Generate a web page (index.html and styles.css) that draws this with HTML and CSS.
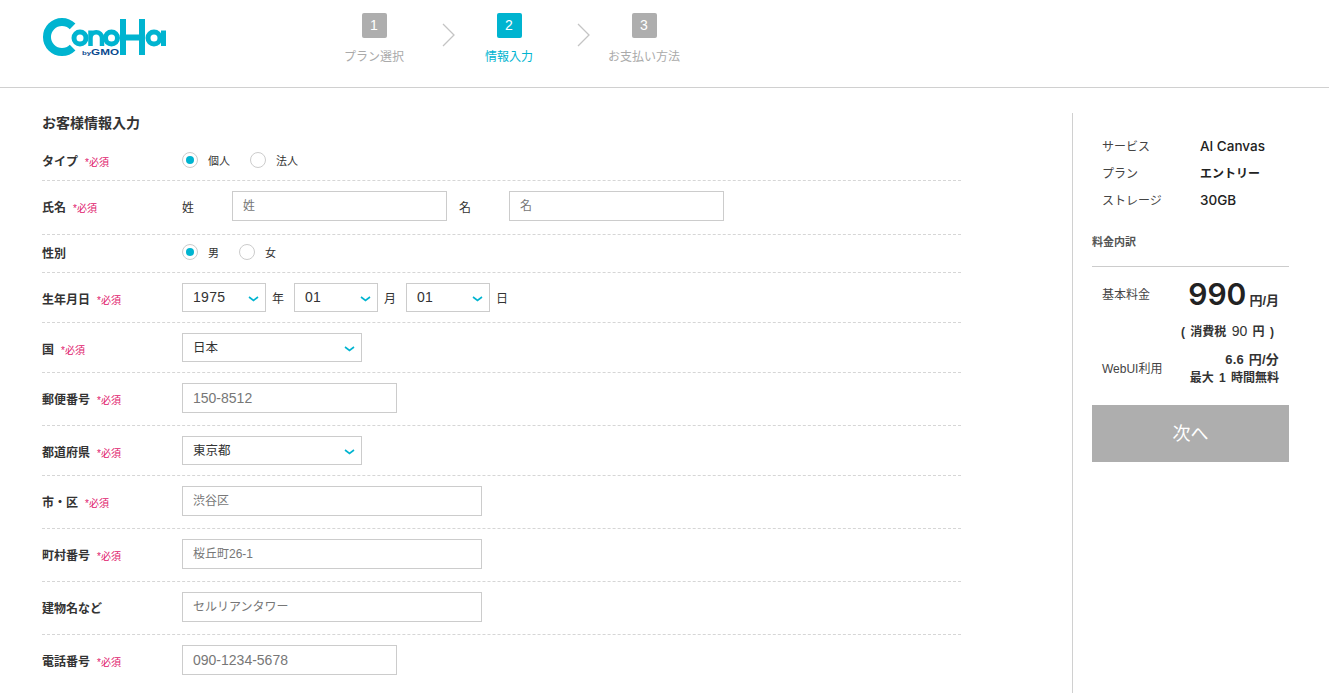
FILE: index.html
```html
<!DOCTYPE html>
<html lang="ja">
<head>
<meta charset="utf-8">
<title>ConoHa お客様情報入力</title>
<link rel="stylesheet" href="styles.css">
</head>
<body>
<header class="header">
  <a class="logo" aria-label="ConoHa by GMO">
    <svg width="126" height="40" viewBox="0 0 126 40" fill="none">
      <g stroke="#00b4d0">
        <path d="M30.6 8.4A15 15 0 1 0 30.6 29.6" stroke-width="8"/>
        <circle cx="38" cy="20" r="6" stroke-width="5"/>
        <path d="M48.5 28V12.5M48.5 20a5.75 5.75 0 0 1 11.5 0V28" stroke-width="4.5"/>
        <circle cx="69.5" cy="20" r="6" stroke-width="5"/>
        <path d="M81 1V37M100 1V37M81 19.5H100" stroke-width="6"/>
        <circle cx="112" cy="20" r="6" stroke-width="5"/>
        <path d="M121.5 12.5V28" stroke-width="5"/>
      </g>
      <text class="logo-gmo" x="40" y="36.5" textLength="37" lengthAdjust="spacingAndGlyphs"><tspan class="logo-by">by</tspan>GMO</text>
    </svg>
  </a>
  <ol class="steps">
    <li class="step"><span class="step-num">1</span><span class="step-label">プラン選択</span></li>
    <li class="step-arrow"><svg width="13" height="24" viewBox="0 0 13 24" fill="none"><path d="M1 1L12 12L1 23" stroke="#c4c4c4" stroke-width="1.3"/></svg></li>
    <li class="step current"><span class="step-num">2</span><span class="step-label">情報入力</span></li>
    <li class="step-arrow"><svg width="13" height="24" viewBox="0 0 13 24" fill="none"><path d="M1 1L12 12L1 23" stroke="#c4c4c4" stroke-width="1.3"/></svg></li>
    <li class="step"><span class="step-num">3</span><span class="step-label">お支払い方法</span></li>
  </ol>
</header>
<main class="main">
  <form class="form">
    <h1 class="form-title">お客様情報入力</h1>

    <div class="row row-radio">
      <div class="label">タイプ<em class="req">*必須</em></div>
      <div class="field">
        <span class="radio on"></span><span class="radio-text">個人</span>
        <span class="radio"></span><span class="radio-text">法人</span>
      </div>
    </div>

    <div class="row row-name">
      <div class="label">氏名<em class="req">*必須</em></div>
      <div class="field">
        <span class="name-label">姓</span><input class="input w215" placeholder="姓">
        <span class="name-label second">名</span><input class="input w215" placeholder="名">
      </div>
    </div>

    <div class="row row-radio">
      <div class="label">性別</div>
      <div class="field">
        <span class="radio on"></span><span class="radio-text">男</span>
        <span class="radio"></span><span class="radio-text">女</span>
      </div>
    </div>

    <div class="row row-select">
      <div class="label">生年月日<em class="req">*必須</em></div>
      <div class="field">
        <div class="select w84"><select class="num"><option>1975</option></select><svg class="chev" width="11" height="6" viewBox="0 0 11 6" fill="none"><path d="M1 1L5.5 4.5L10 1" stroke="#00b4d0" stroke-width="1.6"/></svg></div>
        <span class="unit">年</span>
        <div class="select w84"><select class="num"><option>01</option></select><svg class="chev" width="11" height="6" viewBox="0 0 11 6" fill="none"><path d="M1 1L5.5 4.5L10 1" stroke="#00b4d0" stroke-width="1.6"/></svg></div>
        <span class="unit">月</span>
        <div class="select w84"><select class="num"><option>01</option></select><svg class="chev" width="11" height="6" viewBox="0 0 11 6" fill="none"><path d="M1 1L5.5 4.5L10 1" stroke="#00b4d0" stroke-width="1.6"/></svg></div>
        <span class="unit">日</span>
      </div>
    </div>

    <div class="row row-select">
      <div class="label">国<em class="req">*必須</em></div>
      <div class="field">
        <div class="select w180"><select><option>日本</option></select><svg class="chev" width="11" height="6" viewBox="0 0 11 6" fill="none"><path d="M1 1L5.5 4.5L10 1" stroke="#00b4d0" stroke-width="1.6"/></svg></div>
      </div>
    </div>

    <div class="row row-input">
      <div class="label">郵便番号<em class="req">*必須</em></div>
      <div class="field"><input class="input num w215" placeholder="150-8512"></div>
    </div>

    <div class="row row-select">
      <div class="label">都道府県<em class="req">*必須</em></div>
      <div class="field">
        <div class="select w180"><select><option>東京都</option></select><svg class="chev" width="11" height="6" viewBox="0 0 11 6" fill="none"><path d="M1 1L5.5 4.5L10 1" stroke="#00b4d0" stroke-width="1.6"/></svg></div>
      </div>
    </div>

    <div class="row row-input">
      <div class="label">市・区<em class="req">*必須</em></div>
      <div class="field"><input class="input w300" placeholder="渋谷区"></div>
    </div>

    <div class="row row-input">
      <div class="label">町村番号<em class="req">*必須</em></div>
      <div class="field"><input class="input w300" placeholder="桜丘町26-1"></div>
    </div>

    <div class="row row-input">
      <div class="label">建物名など</div>
      <div class="field"><input class="input w300" placeholder="セルリアンタワー"></div>
    </div>

    <div class="row row-input row-last">
      <div class="label">電話番号<em class="req">*必須</em></div>
      <div class="field"><input class="input num w215" placeholder="090-1234-5678"></div>
    </div>
  </form>

  <aside class="side">
    <dl class="summary">
      <div class="summary-row"><dt>サービス</dt><dd>AI Canvas</dd></div>
      <div class="summary-row"><dt>プラン</dt><dd class="small">エントリー</dd></div>
      <div class="summary-row"><dt>ストレージ</dt><dd>30GB</dd></div>
    </dl>
    <h2 class="side-title">料金内訳</h2>
    <div class="price-row">
      <span class="price-label">基本料金</span>
      <span class="price"><b class="price-num">990</b><b class="price-unit">円/月</b></span>
    </div>
    <p class="tax"><b>( 消費税</b> <span class="tax-num">90</span> <b>円 )</b></p>
    <div class="webui">
      <span class="price-label">WebUI利用</span>
      <span class="webui-price"><b class="webui-rate">6.6 円/分</b><b class="webui-free">最大 1 時間無料</b></span>
    </div>
    <button class="next" type="button">次へ</button>
  </aside>
</main>
</body>
</html>
```
FILE: styles.css
```css
* { box-sizing: border-box; }
html, body { margin: 0; padding: 0; height: 100%; }
body {
  height: 100vh;
  overflow: hidden;
  background: #fff;
  color: #333;
  font-family: "Liberation Sans", "Noto Sans CJK JP", sans-serif;
  font-size: 12px;
}

/* header */
.header {
  display: flex;
  height: 88px;
  padding-left: 42px;
  border-bottom: 1px solid #d0d0d0;
}
.logo { display: block; width: 126px; height: 40px; margin-top: 18px; }
.logo svg { display: block; }
.logo-gmo { font: bold 9px "Liberation Sans", sans-serif; fill: #0b4a8f; }
.logo-by { font-size: 6px; }
.steps {
  display: flex;
  list-style: none;
  margin: 0 0 0 156px;
  padding: 0;
}
.step {
  display: flex;
  flex-direction: column;
  align-items: center;
  width: 100px;
  padding-top: 13px;
  color: #aaa;
}
.step-num {
  width: 25px;
  height: 25px;
  border-radius: 2px;
  background: #aeaeae;
  color: #fff;
  font-size: 14px;
  line-height: 25px;
  text-align: center;
}
.step-label { margin-top: 11px; line-height: 16px; white-space: nowrap; }
.step.current { color: #00b4d0; }
.step.current .step-num { background: #00b4d0; }
.step-arrow { width: 13px; margin: 23px 4px 0 18px; }

/* layout */
.main { display: flex; padding-left: 42px; padding-top: 25px; height: 605px; }
.form { width: 919px; }
.form-title {
  margin: 0;
  padding-bottom: 10px;
  font-size: 14px;
  line-height: 20px;
  font-weight: bold;
}

/* rows */
.row {
  display: flex;
  align-items: center;
  border-bottom: 1px dashed #d6d6d6;
}
.row-radio { padding: 8px 0 11px; }
.row-name { padding: 10px 0 13px; }
.row-select { padding: 10px 0; }
.row-input { padding: 10px 0 12px; }
.row-last { border-bottom: 0; }
.label {
  flex: none;
  width: 140px;
  margin-top: 4px;
  font-weight: bold;
  line-height: 16px;
  color: #333;
}
.row-radio .label { margin-top: 3px; margin-bottom: -1px; }
.req {
  margin-left: 7px;
  font-size: 10px;
  line-height: 1;
  font-style: normal;
  font-weight: normal;
  color: #e0186c;
}
.field { display: flex; align-items: center; }

/* radios */
.radio {
  position: relative;
  width: 16px;
  height: 16px;
  border: 1px solid #ccc;
  border-radius: 50%;
  background: #fff;
}
.radio.on::after {
  content: "";
  position: absolute;
  left: 3px;
  top: 3px;
  width: 8px;
  height: 8px;
  border-radius: 50%;
  background: #00b4d0;
}
.radio-text { margin: 2px 20px 0 10px; font-size: 11px; line-height: 16px; }

/* inputs */
.input {
  height: 30px;
  padding: 0 10px;
  border: 1px solid #ccc;
  border-radius: 0;
  outline: 0;
  background: #fff;
  font: 12px "Liberation Sans", "Noto Sans CJK JP", sans-serif;
  color: #333;
}
.input.num { font-size: 14px; }
.input::placeholder { color: #777; opacity: 1; }
.w215 { width: 215px; }
.w300 { width: 300px; }
.name-label { width: 50px; font-size: 12px; }
.name-label.second { margin-left: 12px; }

/* selects */
.select { position: relative; height: 29px; }
.select select {
  display: block;
  width: 100%;
  height: 100%;
  padding: 0 0 0 10px;
  border: 1px solid #ccc;
  border-radius: 0;
  outline: 0;
  appearance: none;
  background: #fff;
  font: 12.5px "Liberation Sans", "Noto Sans CJK JP", sans-serif;
  color: #333;
}
.select select.num { padding-bottom: 2px; font-size: 14px; letter-spacing: 0.3px; }
.chev { position: absolute; right: 7px; top: 13px; }
.w84 { width: 84px; }
.w180 { width: 180px; }
.unit { width: 28px; padding-left: 6px; font-size: 12px; }

/* side */
.side {
  box-sizing: content-box;
  width: 197px;
  margin-left: 111px;
  padding: 19px 0 0 19px;
  border-left: 1px solid #d0d0d0;
}
.summary { margin: 0; padding-left: 10px; }
.summary-row { display: flex; height: 27px; align-items: center; }
.summary dt { width: 98px; color: #444; }
.summary dd { margin: 0; font: 500 13.5px Inter, "Noto Sans CJK JP", sans-serif; color: #222; }
.summary dd.small { font-size: 12px; font-weight: 700; }
.side-title {
  margin: 21px 0 0;
  padding-bottom: 16px;
  border-bottom: 1px solid #ccc;
  font-size: 11px;
  line-height: 16px;
  font-weight: bold;
  color: #555;
}
.price-row {
  display: flex;
  align-items: flex-start;
  justify-content: space-between;
  padding: 8px 10px 0;
  height: 46px;
}
.price-label { color: #444; line-height: 16px; margin-top: 12px; }
.price { display: flex; align-items: baseline; margin-top: -1px; }
.price-num { font: 600 30px/40px Inter, sans-serif; color: #222; }
.price-unit { margin-left: 3px; font-size: 13px; }
.tax { margin: 10px 0 0; padding-left: 89px; font-size: 12px; line-height: 16px; color: #333; white-space: nowrap; word-spacing: 2px; }
.tax-num { font-size: 14px; }
.webui {
  display: flex;
  justify-content: space-between;
  align-items: center;
  margin-top: 11px;
  padding: 0 10px;
  height: 36px;
}
.webui .price-label { margin-top: 0; }
.webui-price { display: flex; flex-direction: column; align-items: flex-end; line-height: 18px; }
.webui-rate { font-size: 13px; word-spacing: 1px; letter-spacing: 0.2px; }
.webui-free { word-spacing: 2px; }
.next {
  display: block;
  width: 197px;
  height: 57px;
  margin-top: 18px;
  padding: 0 0 4px;
  border: 0;
  background: #aeaeae;
  color: #fff;
  font: 18px "Liberation Sans", "Noto Sans CJK JP", sans-serif;
}
```
